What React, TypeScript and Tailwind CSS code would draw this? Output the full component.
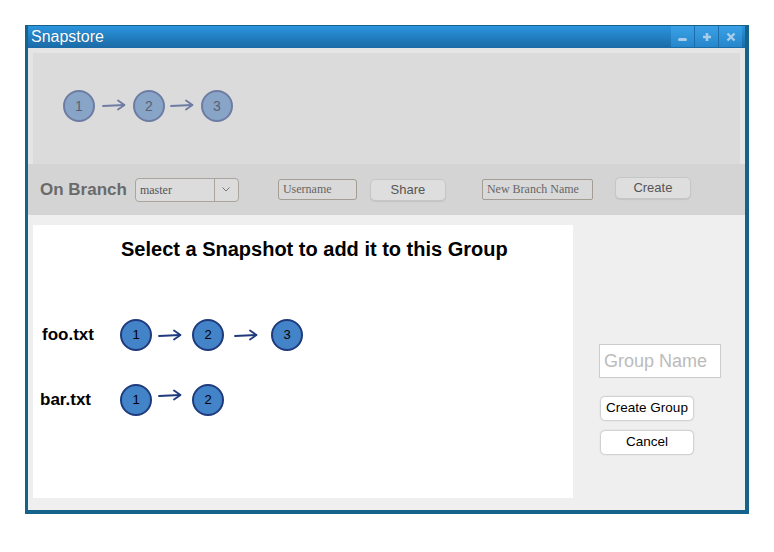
const sans = { fontFamily: '"Liberation Sans", Arial, sans-serif' };

const Arrow = ({ color }: { color: string }) => (
  <svg width="24" height="12" viewBox="0 0 24 12" fill="none">
    <path d="M1 7 L22 6" stroke={color} strokeWidth="1.8" strokeLinecap="round" />
    <path d="M16 1.5 L22.5 6 L16 10.5" stroke={color} strokeWidth="1.8" strokeLinecap="round" strokeLinejoin="round" />
  </svg>
);

const GhostNode = ({ n }: { n: number }) => (
  <div className="flex h-8 w-8 items-center justify-center rounded-full border-2 border-[#6e7ca4] bg-[#88a5c8] text-[14px] text-[#5b6070]">
    {n}
  </div>
);

const Node = ({ n }: { n: number }) => (
  <div className="flex h-8 w-8 cursor-pointer items-center justify-center rounded-full border-2 border-[#1f3b7d] bg-[#4383c8] text-[13px] text-black">
    {n}
  </div>
);

const files = [
  { name: "foo.txt", nodes: [1, 2, 3], pl: "pl-[9px]", mt: "mt-[58px]" },
  { name: "bar.txt", nodes: [1, 2], pl: "pl-[7px]", mt: "mt-[33px]" },
];

export default function App() {
  return (
    <div className="min-h-[552px] bg-white pl-[25px] pt-[25px]" style={sans}>
      <div className="flex h-[489px] w-[724px] flex-col border-t border-l-[3px] border-r-4 border-b-4 border-[#15628a] bg-[#efefef]">
        {/* title bar */}
        <div className="flex h-[22px] items-center bg-gradient-to-b from-[#2b95de] to-[#1a6aa6] pl-[3px]">
          <span className="text-[16px] leading-none text-white [text-shadow:0_0_1px_rgba(0,0,0,0.3)]">Snapstore</span>
          <div className="ml-auto mr-[3px] flex h-[21px] self-start gap-px bg-[#1b6ca8]">
            {["min", "max", "close"].map((k) => (
              <div key={k} className="flex w-[23px] items-center justify-center bg-gradient-to-b from-[#3aa1e6] to-[#2686cc]">
                {k === "min" && <div className="mt-[5px] h-[3px] w-[9px] rounded-sm bg-[#a7cdea]" />}
                {k === "max" && (
                  <svg width="10" height="10" viewBox="0 0 10 10">
                    <path d="M5 1 V9 M1 5 H9" stroke="#a7cdea" strokeWidth="2.6" />
                  </svg>
                )}
                {k === "close" && (
                  <svg width="10" height="10" viewBox="0 0 10 10">
                    <path d="M1.5 1.5 L8.5 8.5 M8.5 1.5 L1.5 8.5" stroke="#a7cdea" strokeWidth="2.4" />
                  </svg>
                )}
              </div>
            ))}
          </div>
        </div>

        {/* history panel */}
        <div className="bg-[#e5e5e5] px-[5px] pt-[5px]">
          <div className="flex h-[111px] items-start bg-[#dbdbdb] pl-[30px] pt-[37px]">
            <GhostNode n={1} />
            <div className="ml-[7px] mr-[7px] mt-[9px]"><Arrow color="#6e7ca4" /></div>
            <GhostNode n={2} />
            <div className="ml-[5px] mr-[7px] mt-[9px]"><Arrow color="#6e7ca4" /></div>
            <GhostNode n={3} />
          </div>
        </div>

        {/* toolbar */}
        <div className="flex h-[51px] items-center bg-[#d4d4d4] pl-[12px]">
          <span className="text-[17px] font-bold text-[#6a6a6a]">On Branch</span>
          <div className="ml-[8px] flex h-[24px] w-[104px] overflow-hidden rounded-[4px] border border-[#aba69d] bg-[#dcdcdc]">
            <span className="flex-1 pl-[4px] text-[12px] leading-[22px] text-[#555]" style={{ fontFamily: '"Liberation Serif", serif' }}>
              master
            </span>
            <div className="flex w-[24px] items-center justify-center border-l border-[#aba69d]">
              <svg width="8" height="5" viewBox="0 0 8 5">
                <path d="M0.5 0.5 L4 4 L7.5 0.5" stroke="#777" fill="none" strokeWidth="1" />
              </svg>
            </div>
          </div>
          <input
            placeholder="Username"
            className="ml-[39px] h-[21px] w-[79px] rounded-[3px] border border-[#a39d93] bg-[#d9d9d9] px-[4px] text-[12px] placeholder:text-[#666] outline-none"
            style={{ fontFamily: '"Liberation Serif", serif' }}
          />
          <button className="ml-[13px] h-[22px] w-[76px] rounded-[5px] border border-[#c6c6c6] bg-[#dedede] text-[13px] text-[#555] shadow-[0_1px_1px_rgba(0,0,0,0.08)]">
            Share
          </button>
          <input
            placeholder="New Branch Name"
            className="ml-[36px] h-[21px] w-[111px] rounded-[2px] border border-[#a39d93] bg-[#d9d9d9] px-[4px] text-[12px] placeholder:text-[#666] outline-none"
            style={{ fontFamily: '"Liberation Serif", serif' }}
          />
          <button className="-mt-[3px] ml-[22px] h-[22px] w-[76px] rounded-[5px] border border-[#c6c6c6] bg-[#dedede] text-[13px] text-[#555] shadow-[0_1px_1px_rgba(0,0,0,0.08)]">
            Create
          </button>
        </div>

        {/* group builder */}
        <div className="flex flex-1 pl-[5px] pt-[10px]">
          <div className="flex h-[273px] w-[540px] flex-col bg-white">
            <h1 className="pl-[88px] pt-[13px] text-[20px] font-bold leading-[23px] text-black">
              Select a Snapshot to add it to this Group
            </h1>
            {files.map((f) => (
              <div key={f.name} className={`flex h-8 items-center ${f.mt} ${f.pl}`}>
                <span className={`${f.name === "foo.txt" ? "w-[78px]" : "w-[80px]"} text-[17px] font-bold text-black`}>{f.name}</span>
                <div className="flex items-center">
                  {f.nodes.map((n, i) => (
                    <div key={n} className="flex items-center">
                      {i > 0 && (
                        <div className={`${i === 1 ? "ml-[6px] mr-[10px]" : "ml-[10px] mr-[13px]"} ${f.name === "bar.txt" ? "-mt-[10px]" : ""}`}>
                          <Arrow color="#1f3b7d" />
                        </div>
                      )}
                      <Node n={n} />
                    </div>
                  ))}
                </div>
              </div>
            ))}
          </div>
          <div className="flex flex-1 flex-col pl-[26px] pt-[119px]">
            <input
              placeholder="Group Name"
              className="h-[34px] w-[122px] border border-[#cccccc] bg-white px-[4px] text-[18px] placeholder:text-[#bbbbbb] outline-none"
            />
            <button className="ml-[2px] mt-[19px] h-[23px] w-[92px] rounded-[4px] bg-white text-[13.5px] text-black shadow-[0_0_2px_rgba(0,0,0,0.45)]">
              Create Group
            </button>
            <button className="ml-[2px] mt-[11px] h-[23px] w-[92px] rounded-[4px] bg-white text-[13.5px] text-black shadow-[0_0_2px_rgba(0,0,0,0.45)]">
              Cancel
            </button>
          </div>
        </div>
      </div>
    </div>
  );
}
